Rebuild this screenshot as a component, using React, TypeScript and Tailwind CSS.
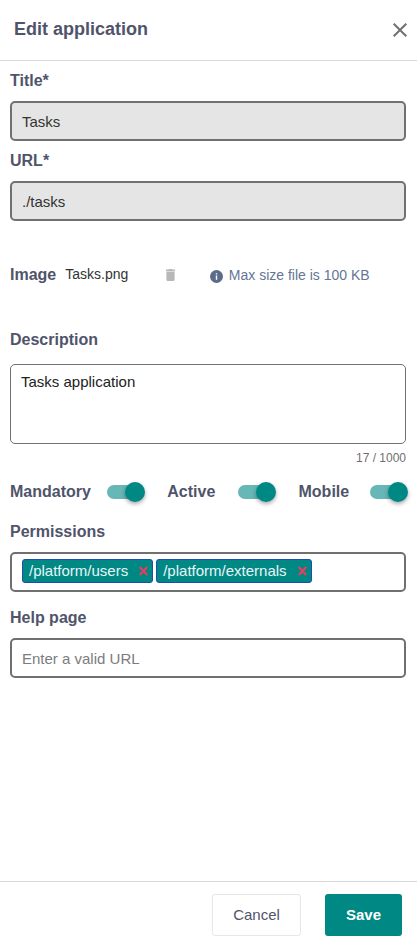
import React from "react";

const label = "text-[16px] leading-6 font-bold text-[#50546b]";

function Field({ name, value, className = "" }: { name: string; value: string; className?: string }) {
  return (
    <div className={className}>
      <div className={label}>{name}</div>
      <input
        disabled
        defaultValue={value}
        className="mt-2 block h-10 w-full rounded-[5px] border-2 border-[#707070] bg-[#e5e5e5] px-2.5 text-[15px] text-[#333]"
      />
    </div>
  );
}

function Toggle({ name, className }: { name: string; className: string }) {
  return (
    <div className={`flex items-center justify-between ${className}`}>
      <span className={label}>{name}</span>
      <span className="flex h-3.5 w-9 items-center justify-end rounded-full bg-[#66b7b5]">
        <span className="-mr-0.5 size-5 shrink-0 rounded-full bg-[#008885] shadow-[0_2px_4px_rgba(0,0,0,0.35)]" />
      </span>
    </div>
  );
}

function Tag({ name }: { name: string }) {
  return (
    <span className="flex h-6 items-center rounded-[3px] border border-[#1e4cb0] bg-[#008885] pr-1 pb-px pl-1.5 text-[15px] leading-none text-[#e9f5f5]">
      {name}
      <svg className="mt-px ml-[11px] h-2.5 w-[9px]" viewBox="0 0 9 10" fill="none" stroke="#ee3b5b" strokeWidth="2.2">
        <path d="M.7 1l7.600 8M8.300 1L.7 9" />
      </svg>
    </span>
  );
}

export default function App() {
  return (
    <div className="flex h-[947px] w-[417px] flex-col overflow-hidden bg-white font-['Liberation_Sans',Arial,sans-serif]">
      <header className="flex h-[61px] items-center justify-between border-b border-[#dadada] pr-2.5 pb-0.5 pl-3.5">
        <h1 className="text-[18px] leading-6 font-bold text-[#50546b]">Edit application</h1>
        <svg className="mt-0.5 size-3.5" viewBox="0 0 14 14" fill="none" stroke="#707070" strokeWidth="2">
          <path d="M.7.7l12.6 12.6M13.3.7.7 13.3" />
        </svg>
      </header>

      <main className="flex-1 pt-2 pr-[11px] pl-2.5">
        <Field name="Title*" value="Tasks" />
        <Field name="URL*" value="./tasks" className="mt-2" />

        <div className="mt-[42px] flex h-6 items-center">
          <span className={label}>Image</span>
          <span className="ml-[9px] pb-0.5 text-[14px] leading-[22px] text-[#333]">Tasks.png</span>
          <svg className="ml-[38px] h-3 w-[9px]" viewBox="0 0 9 12" fill="#b8b8b8">
            <path d="M0 .5h2.500L3 0h3l.5.500H9V2H0zM.4 2.500h8.200v8.300c0 .7-.5 1.200-1.200 1.200H1.600C.9 12 .4 11.500.4 10.800z" />
          </svg>
          <svg className="mt-0.5 ml-[35px] size-[13px]" viewBox="0 0 13 13">
            <circle cx="6.500" cy="6.500" r="6.500" fill="#5b6c8b" />
            <path d="M5.800 5.600h1.400v4.200H5.800zM5.800 3.200h1.400v1.300H5.800z" fill="#fff" />
          </svg>
          <span className="ml-[5.500px] text-[14px] leading-6 text-[#647696]">Max size file is 100 KB</span>
        </div>

        <div className={`mt-[41px] ${label}`}>Description</div>
        <textarea
          defaultValue="Tasks application"
          className="mt-3 block h-20 w-full resize-none rounded-[5px] border border-[#707070] px-2.5 py-[7px] text-[15px] leading-5 text-[#222]"
        />
        <div className="mt-1 text-right text-[12px] leading-5 text-[#707070]">17 / 1000</div>

        <div className="mt-3 flex justify-between">
          <Toggle name="Mandatory" className="w-[133px]" />
          <Toggle name="Active" className="w-[107px]" />
          <Toggle name="Mobile" className="w-[107.500px]" />
        </div>

        <div className={`mt-4 ${label}`}>Permissions</div>
        <div className="mt-2 flex h-10 gap-[3px] rounded-[5px] border-2 border-[#707070] px-2.5 pt-[5px]">
          <Tag name="/platform/users" />
          <Tag name="/platform/externals" />
        </div>

        <div className={`mt-[14px] ${label}`}>Help page</div>
        <input
          placeholder="Enter a valid URL"
          className="mt-2 block h-10 w-full rounded-[5px] border-2 border-[#707070] px-2.5 text-[15px] placeholder:text-[#7c7c7c]"
        />
      </main>

      <footer className="flex h-[66px] justify-end gap-6 border-t border-[#dadada] pt-3 pr-[15px]">
        <button className="h-[42px] w-[89px] rounded-[3px] border border-[#e1e8ee] text-[15px] text-[#50546b]">Cancel</button>
        <button className="h-[42px] w-[77px] rounded-[3px] bg-[#008885] text-[15px] font-bold text-white">Save</button>
      </footer>
    </div>
  );
}
